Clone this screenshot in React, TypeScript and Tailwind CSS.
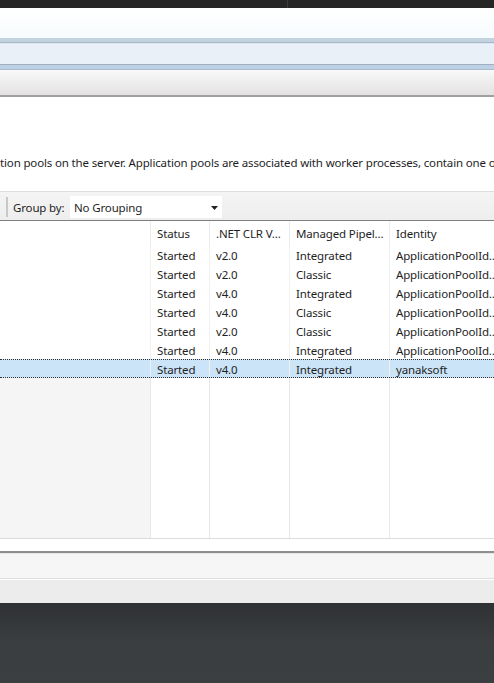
import React from "react";

const rows = [
  { s: "Started", clr: "v2.0", p: "Integrated", id: "ApplicationPoolId..." },
  { s: "Started", clr: "v2.0", p: "Classic", id: "ApplicationPoolId..." },
  { s: "Started", clr: "v4.0", p: "Integrated", id: "ApplicationPoolId..." },
  { s: "Started", clr: "v4.0", p: "Classic", id: "ApplicationPoolId..." },
  { s: "Started", clr: "v2.0", p: "Classic", id: "ApplicationPoolId..." },
  { s: "Started", clr: "v4.0", p: "Integrated", id: "ApplicationPoolId..." },
  { s: "Started", clr: "v4.0", p: "Integrated", id: "yanaksoft", sel: true },
];

const cell = "h-full flex items-center pl-[6px] pt-[2px] whitespace-nowrap overflow-hidden";

export default function App() {
  return (
    <div
      className="w-[494px] h-[683px] overflow-hidden flex flex-col text-[11.5px] tracking-[-0.15px] text-[#1e1e1e] bg-white"
      style={{ fontFamily: '"Noto Sans", "Open Sans", sans-serif' }}
    >
      {/* top dark bar */}
      <div className="h-[8px] flex bg-[#262626]">
        <div className="w-[288px] border-r border-[#3c3c3c]" />
      </div>
      <div className="h-[30px] bg-gradient-to-b from-white to-[#f6fbfd]" />
      {/* blue band */}
      <div className="h-[5px] bg-[#c2d2df] border-b border-[#a7b7cb]" />
      <div className="h-[21px] bg-[#e9f0f8] border-t border-[#dfe8f2]" />
      <div className="h-[6px] bg-[#bdd1e5] border-t border-[#a1aec0] border-b border-b-[#aab9cc]" />
      {/* gray gradient */}
      <div className="h-[27px] bg-gradient-to-b from-[#f9f9f9] to-[#e4e2e2] border-b-2 border-[#a0a0a0]" />
      {/* description */}
      <div className="h-[94px] bg-white flex flex-col justify-end pb-[20px] overflow-hidden">
        <div className="whitespace-nowrap leading-[16px]">
          tion pools on the server. Application pools are associated with worker processes, contain one or more applications
        </div>
      </div>
      {/* toolbar */}
      <div className="h-[30px] flex items-center pt-[2px] bg-gradient-to-b from-[#f4f4f4] to-[#eeeeee] border-t border-[#dedede] border-b border-b-[#7f7f7f]">
        <div className="w-[8px] h-[20px] border-r-2 border-[#c8c8c8]" />
        <div className="pl-[5px] w-[62px] pt-[1px] whitespace-nowrap">Group by:</div>
        <div className="w-[152px] h-[22px] bg-white flex items-center pl-[4px] pr-[4px] pt-[1px] justify-between">
          <span>No Grouping</span>
          <svg width="7" height="4" viewBox="0 0 7 4">
            <path d="M0 0h7L3.5 4z" fill="#222" />
          </svg>
        </div>
        <div className="flex-1" />
      </div>
      {/* grid */}
      <div className="h-[318px] flex flex-col border-b border-[#dcdcdc]">
        <div className="h-[24px] flex items-center bg-white">
          <div className="w-[150px] h-full" />
          <div className={"w-[59px] border-l border-[#ececec] " + cell}>Status</div>
          <div className={"w-[80px] border-l border-[#ececec] " + cell}>.NET CLR V...</div>
          <div className={"w-[100px] border-l border-[#ececec] " + cell}>Managed Pipel...</div>
          <div className={"flex-1 border-l border-[#ececec] " + cell}>Identity</div>
        </div>
        {rows.map((r, i) => (
          <div
            key={i}
            className={
              "h-[19px] flex items-center " +
              (r.sel ? "bg-[#cce4f7] border-y border-dotted border-[#333]" : "bg-white")
            }
          >
            <div className="w-[150px] h-full" />
            <div className={"w-[59px] border-l border-[#f0f0f0] " + cell}>{r.s}</div>
            <div className={"w-[80px] border-l border-[#f0f0f0] " + cell}>{r.clr}</div>
            <div className={"w-[100px] border-l border-[#f0f0f0] " + cell}>{r.p}</div>
            <div className={"flex-1 border-l border-[#f0f0f0] " + cell}>{r.id}</div>
          </div>
        ))}
        <div className="flex-1 flex">
          <div className="w-[150px] h-full bg-[#f5f5f5]" />
          <div className="w-[59px] h-full border-l border-[#e8e8e8] bg-white" />
          <div className="w-[80px] h-full border-l border-[#e8e8e8] bg-white" />
          <div className="w-[100px] h-full border-l border-[#e8e8e8] bg-white" />
          <div className="flex-1 h-full border-l border-[#e8e8e8] bg-white" />
        </div>
      </div>
      <div className="h-[14px] bg-white border-b-2 border-[#8e8e8e]" />
      {/* status area */}
      <div className="h-[26px] bg-[#f6f6f6] border-t border-[#e6e6e6] border-b border-b-[#dedede]" />
      <div className="h-[24px] bg-[#ececec] border-t border-white" />
      {/* dark bottom */}
      <div className="flex-1 bg-gradient-to-b from-[#2f3133] via-[#3b3e41] to-[#3c3f42]" />
    </div>
  );
}
